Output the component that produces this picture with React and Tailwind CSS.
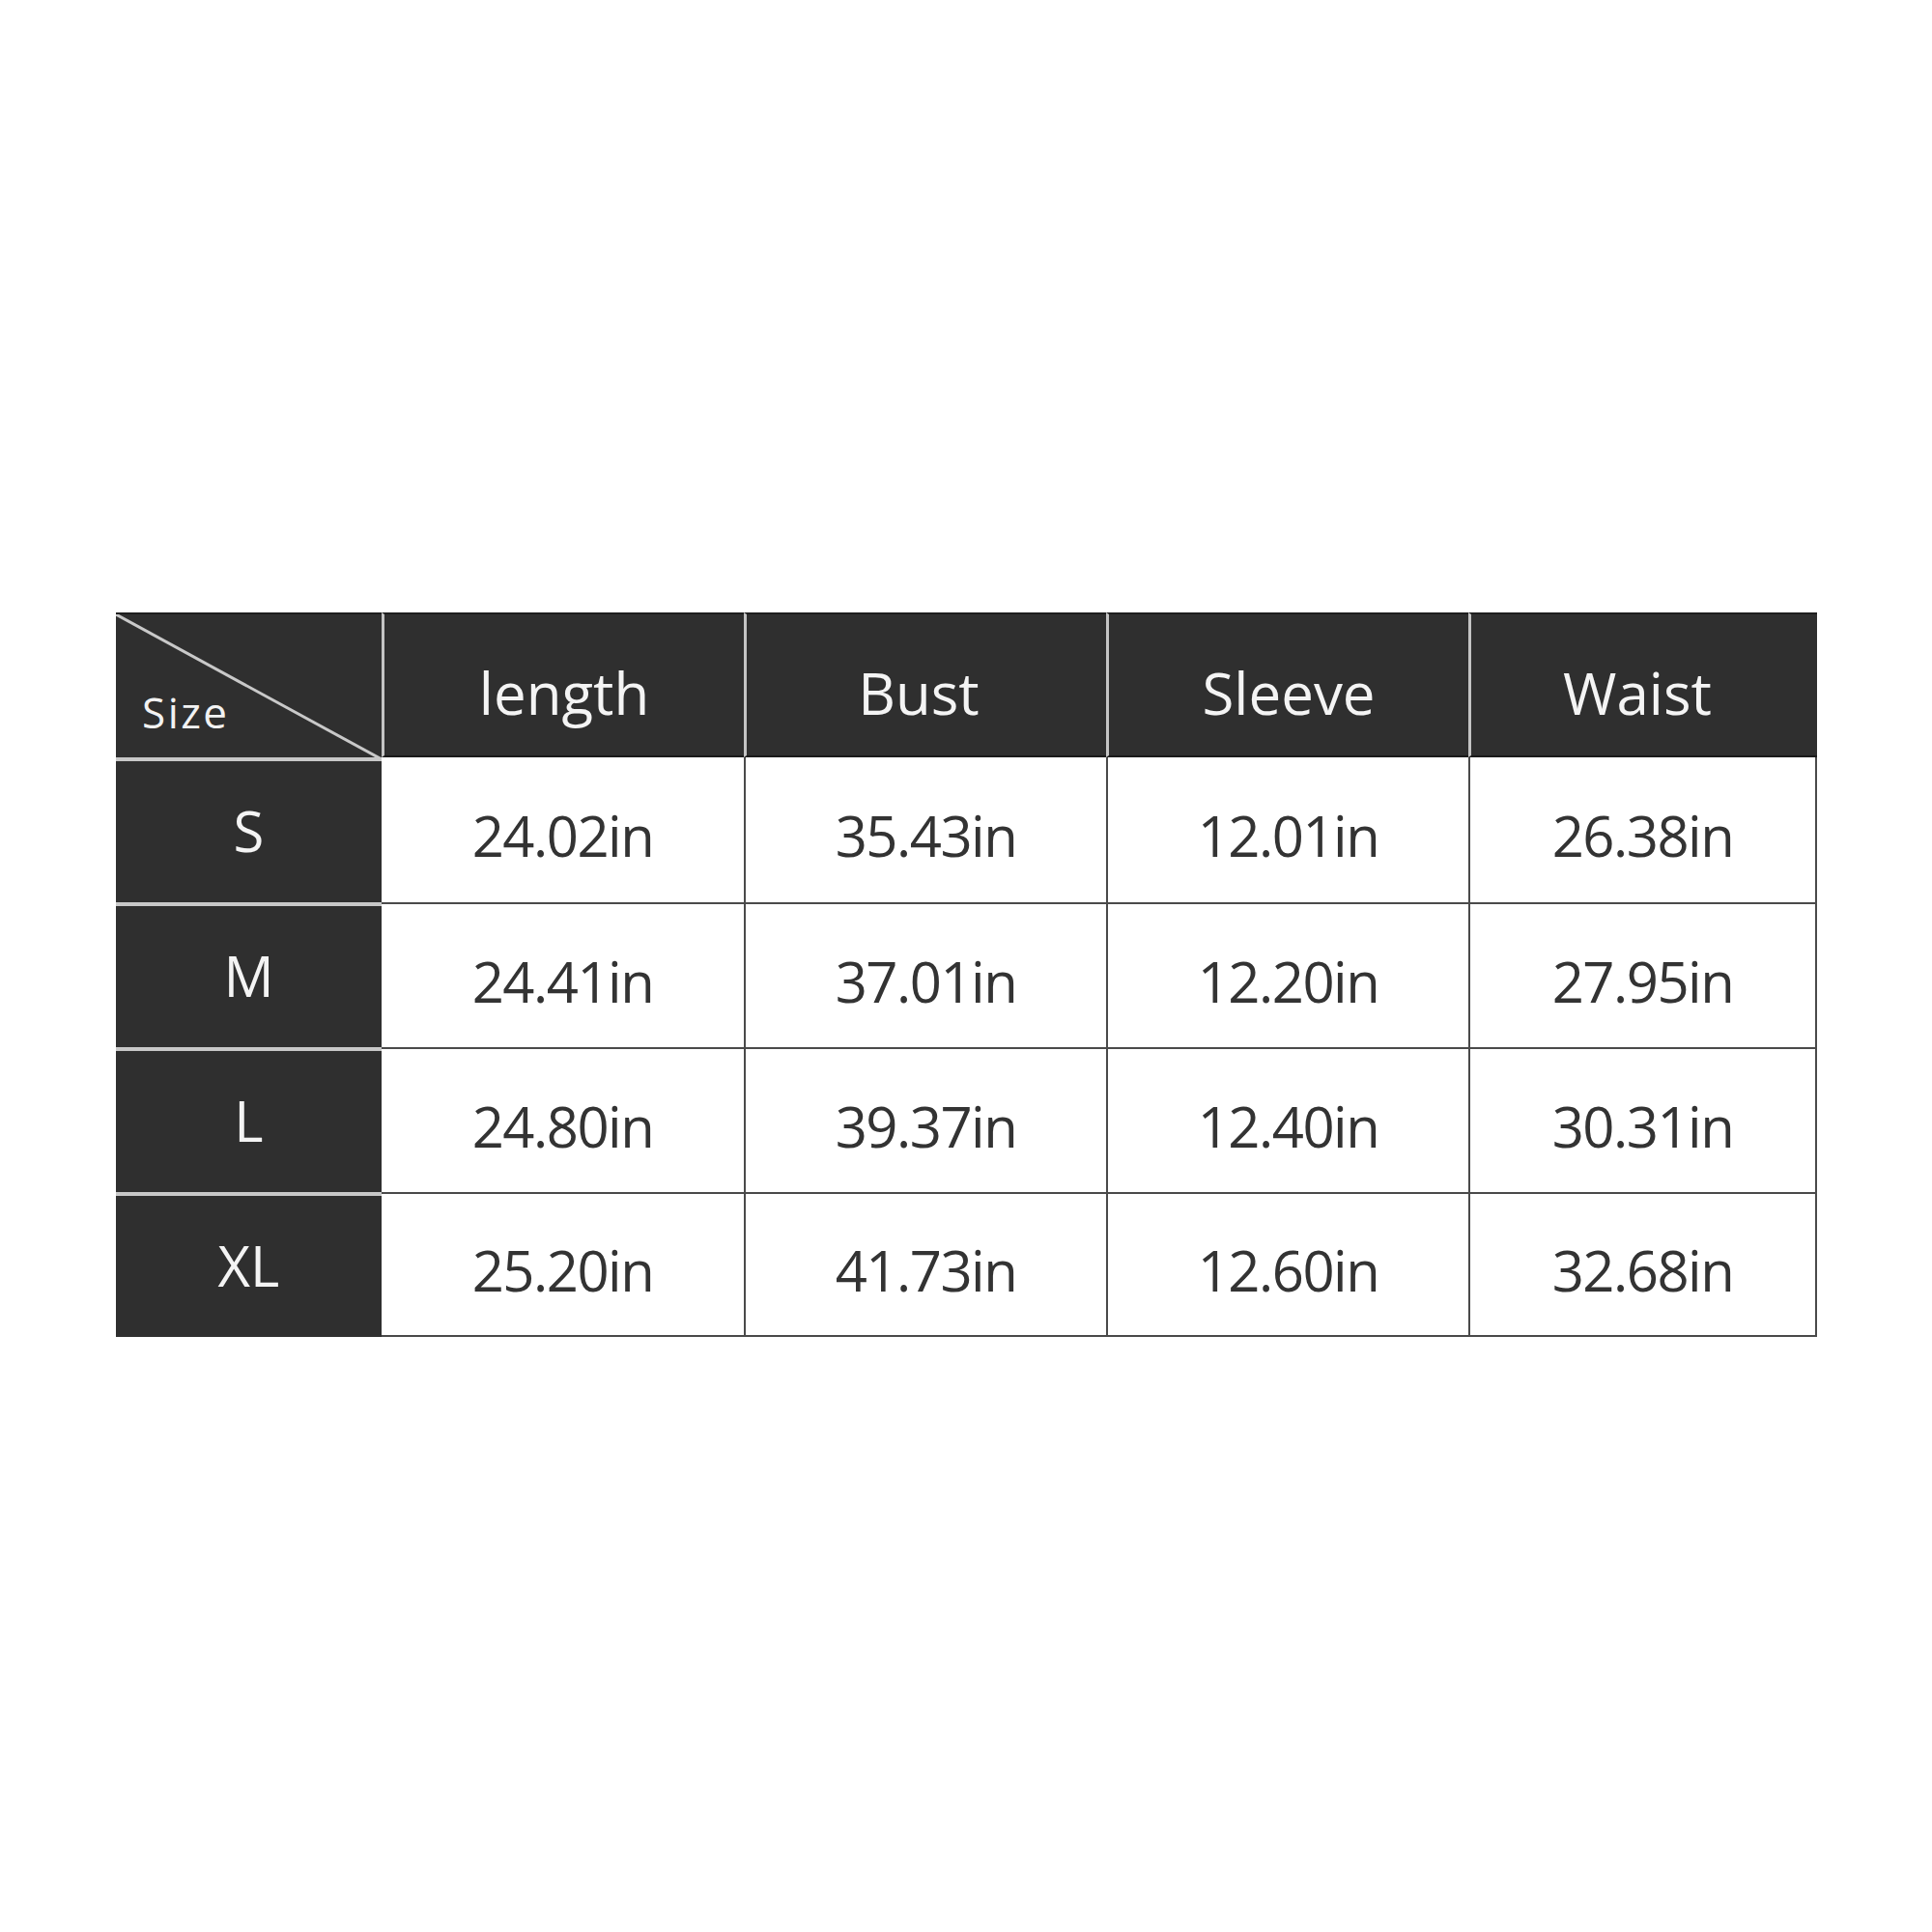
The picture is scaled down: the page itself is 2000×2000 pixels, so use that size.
import React from "react";

const heads = ["length", "Bust", "Sleeve", "Waist"];

const rows = [
    { size: "S", vals: ["24.02in", "35.43in", "12.01in", "26.38in"] },
    { size: "M", vals: ["24.41in", "37.01in", "12.20in", "27.95in"] },
    { size: "L", vals: ["24.80in", "39.37in", "12.40in", "30.31in"] },
    { size: "XL", vals: ["25.20in", "41.73in", "12.60in", "32.68in"] },
];

const SizeChart = () => {
    return (
        <div className="w-[2000px] h-[2000px] bg-white pl-[120px] pt-[634px] font-['Open_Sans',sans-serif]">
            <div className="grid grid-cols-[275px_375px_375px_375px_361px] grid-rows-[150px_150px_150px_150px_150px] w-[1761px]">
                {/* corner cell */}
                <div className="relative bg-[#2f2f2f] border-t-2 border-t-[#1f1f1f]">
                    <svg className="absolute inset-0" width="275" height="150" viewBox="0 0 275 150">
                        <line x1="0" y1="0" x2="275" y2="150" stroke="#c9c9c9" strokeWidth="3" />
                    </svg>
                    <span className="absolute left-[27px] top-[79px] text-[44px] leading-none tracking-[2.5px] text-[#f2f2f2]">
                        Size
                    </span>
                </div>
                {heads.map((h, i) => (
                    <div
                        key={h}
                        className={
                            "flex items-center justify-center pt-[16px] bg-[#2f2f2f] border-l-[3px] border-l-[#c4c4c4] border-t-2 border-t-[#1f1f1f] border-b-2 border-b-[#1a1a1a] text-[60px] text-[#f4f4f4] " +
                            (i === 1 ? "pr-[16px]" : i === 3 ? "pr-[14px]" : "")
                        }
                    >
                        {h}
                    </div>
                ))}
                {rows.map((r, ri) => (
                    <React.Fragment key={r.size}>
                        <div className="flex items-center justify-center pb-[4px] bg-[#2f2f2f] border-t-4 border-t-[#c8c8c8] text-[58px] text-[#f4f4f4]">
                            {r.size}
                        </div>
                        {r.vals.map((v, ci) => (
                            <div
                                key={ci}
                                className={
                                    "flex items-center justify-center pt-[10px] bg-white text-[58px] tracking-[-1.5px] text-[#333333] border-[#4a4a4a] " +
                                    (ci > 0 ? "border-l-2 " : "") +
                                    (ci === 3 ? "border-r-2 " : "") +
                                    (ri > 0 ? "border-t-2 " : "") +
                                    (ri === 3 ? "border-b-2" : "")
                                }
                            >
                                {v}
                            </div>
                        ))}
                    </React.Fragment>
                ))}
            </div>
        </div>
    );
};

export default SizeChart;
